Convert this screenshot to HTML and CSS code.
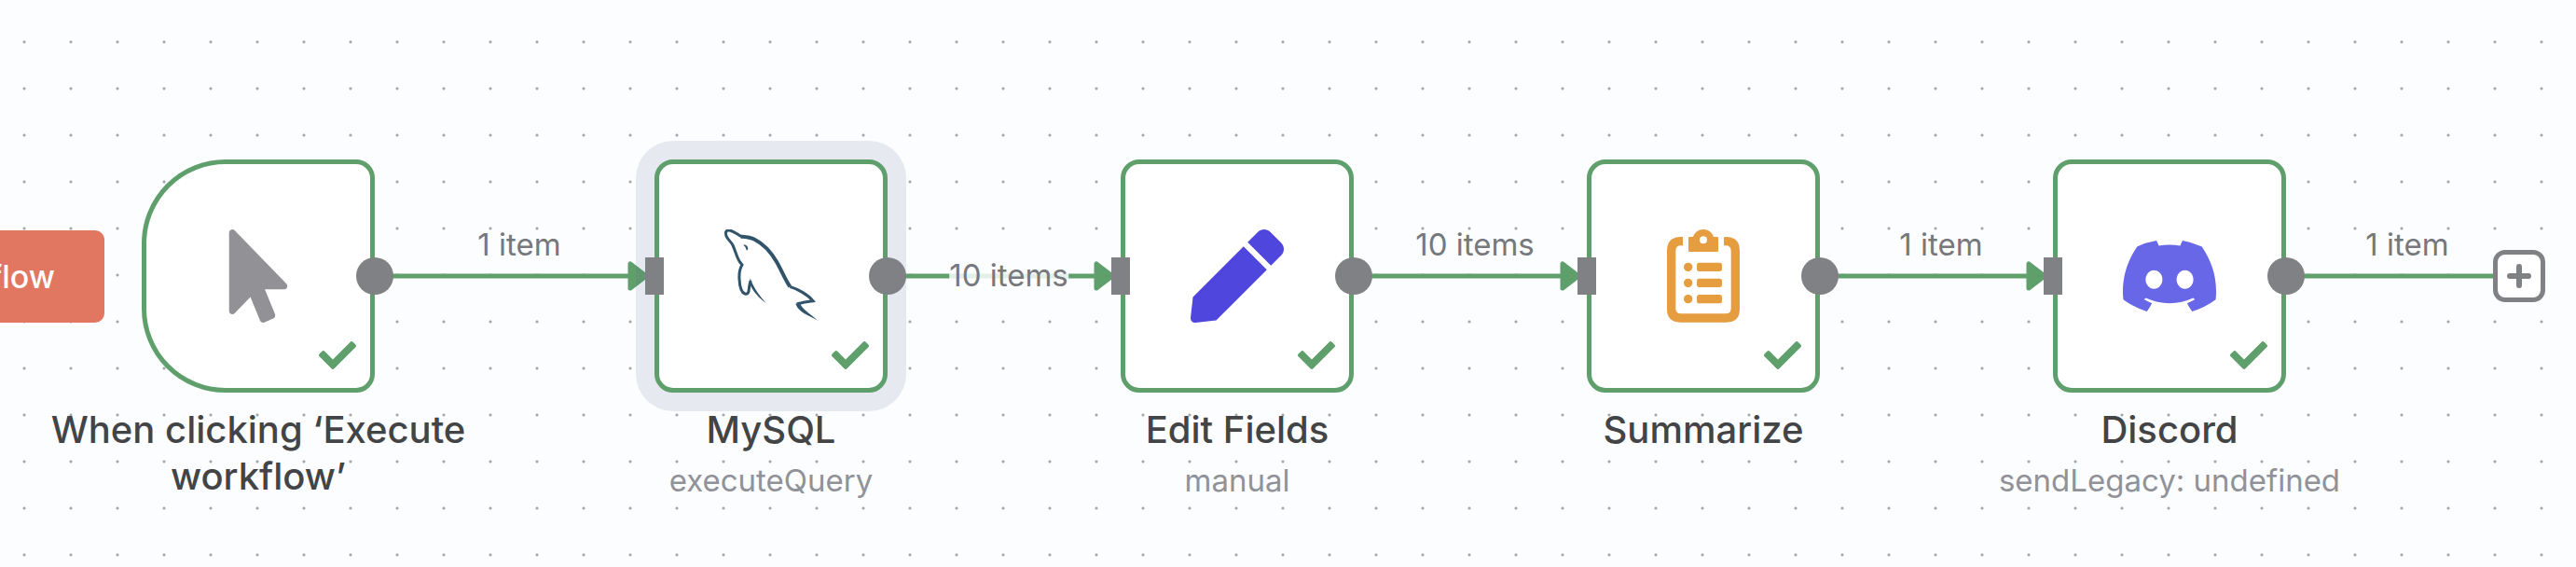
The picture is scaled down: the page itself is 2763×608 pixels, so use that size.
FILE: index.html
```html
<!DOCTYPE html>
<html lang="en">
<head>
<meta charset="utf-8">
<meta name="viewport" content="width=device-width, initial-scale=1">
<title>Workflow canvas</title>
<link rel="stylesheet" href="styles.css">
</head>
<body>
<svg class="defs" aria-hidden="true">
  <symbol id="check" viewBox="0 65 512 382"><path d="M173.898 439.404l-166.4-166.4c-9.997-9.997-9.997-26.206 0-36.204l36.203-36.204c9.997-9.998 26.207-9.998 36.204 0L192 312.69 432.095 72.596c9.997-9.997 26.207-9.997 36.204 0l36.203 36.204c9.997 9.997 9.997 26.206 0 36.204l-294.4 294.401c-9.998 9.997-26.207 9.997-36.204-.001z"/></symbol>
  <marker id="arrow" viewBox="0 0 24 32" markerWidth="24" markerHeight="32" refX="2" refY="16" markerUnits="userSpaceOnUse"><path class="arrow" d="M3 3V29L20 16Z"/></marker>
</svg>
<main class="canvas">
  <svg class="edges" aria-hidden="true">
    <path d="M402 296H675" marker-end="url(#arrow)"/>
    <path d="M952 296H1175" marker-end="url(#arrow)"/>
    <path d="M1452 296H1675" marker-end="url(#arrow)"/>
    <path d="M1952 296H2175" marker-end="url(#arrow)"/>
    <path d="M2452 296H2680"/>
  </svg>
  <span class="edge-label edge-label-1">1 item</span>
  <span class="edge-label edge-label-2">10 items</span>
  <span class="edge-label edge-label-3">10 items</span>
  <span class="edge-label edge-label-4">1 item</span>
  <span class="edge-label edge-label-5">1 item</span>

  <article class="node node-trigger">
    <button class="execute" type="button">Execute workflow</button>
    <div class="box">
      <svg class="icon icon-cursor" viewBox="0 0 320 512"><path d="M302.189 329.126H196.105l55.831 135.993c3.889 9.428-.555 19.999-9.444 23.999l-49.165 21.427c-9.165 4-19.443-.571-23.332-9.714l-53.053-129.136-86.664 89.138C18.729 472.71 0 463.554 0 447.977V18.299C0 1.899 19.921-6.096 30.277 5.443l284.412 292.542c11.472 11.179 3.007 31.141-12.5 31.141z"/></svg>
      <svg class="status"><use href="#check"/></svg>
      <span class="output"></span>
    </div>
    <div class="caption"><h2 class="title">When clicking ‘Execute workflow’</h2></div>
  </article>

  <article class="node node-mysql">
    <div class="box selected">
      <svg class="icon icon-mysql" viewBox="51 48 300 300">
        <path class="body" d="M106 71C92 64 82 54 68 51C56 49 53 58 57 69C61 80 72 87 78 99C86 116 92 141 101 153L108 162C101 173 98 192 99 208C100 230 106 251 117 255C128 258 129 249 130 240C131 228 133 222 135 213"/>
        <path class="back" d="M104 71C120 72 132 72 148 80C176 94 202 123 219 152C234 178 245 207 262 232"/>
        <path class="tail" d="M262 232C284 239 318 256 336 278C322 279 302 282 284 288"/>
        <path d="M134 205C144 235 164 262 185 285C163 270 143 248 132 222Z"/>
        <path d="M280 287L294 286C301 305 331 323 351 341C326 325 290 317 280 287Z"/>
        <path d="M112 98C118 95 128 102 127 111L123 116L118 104Z"/>
      </svg>
      <svg class="status"><use href="#check"/></svg>
      <span class="input"></span><span class="output"></span>
    </div>
    <div class="caption"><h2 class="title">MySQL</h2><p class="subtitle">executeQuery</p></div>
  </article>

  <article class="node node-edit">
    <div class="box">
      <svg class="icon icon-pen" viewBox="0 0 512 512"><path d="M290.74 93.24l128.02 128.02-277.99 277.99-114.14 12.6C11.35 513.54-1.56 500.62.14 485.34l12.7-114.22 277.9-277.88zm207.2-19.06l-60.11-60.11c-18.75-18.75-49.16-18.75-67.91 0l-56.55 56.55 128.02 128.02 56.55-56.55c18.75-18.76 18.75-49.16 0-67.91z"/></svg>
      <svg class="status"><use href="#check"/></svg>
      <span class="input"></span><span class="output"></span>
    </div>
    <div class="caption"><h2 class="title">Edit Fields</h2><p class="subtitle">manual</p></div>
  </article>

  <article class="node node-summarize">
    <div class="box">
      <svg class="icon icon-clipboard" viewBox="351 288 300 300">
        <path d="M435 312V340H429Q412 340 412 357V542Q412 559 429 559H573Q590 559 590 542V357Q590 340 573 340H567V315Q567 312 570 312H576Q618 314 618 356V544Q618 587 575 587H427Q384 587 384 544V356Q384 314 426 312Z"/>
        <path fill-rule="evenodd" d="M456 312H468C473 297 485 288 501 288S529 297 534 312H546Q549 312 549 315V357Q549 360 546 360H456Q453 360 453 357V315Q453 312 456 312ZM501 310A12 12 0 1 0 501 334A12 12 0 1 0 501 310Z"/>
        <circle cx="452" cy="409" r="14"/><circle cx="452" cy="460" r="14"/><circle cx="452" cy="512" r="14"/>
        <rect x="480" y="395" width="81" height="28" rx="8"/><rect x="480" y="446" width="81" height="28" rx="8"/><rect x="480" y="498" width="81" height="28" rx="8"/>
      </svg>
      <svg class="status"><use href="#check"/></svg>
      <span class="input"></span><span class="output"></span>
    </div>
    <div class="caption"><h2 class="title">Summarize</h2></div>
  </article>

  <article class="node node-discord">
    <div class="box">
      <svg class="icon icon-discord" viewBox="0 0 127.14 96.36"><path d="M107.7,8.07A105.15,105.15,0,0,0,81.47,0a72.06,72.06,0,0,0-3.36,6.83A97.68,97.68,0,0,0,49,6.83,72.37,72.37,0,0,0,45.64,0,105.89,105.89,0,0,0,19.39,8.09C2.79,32.65-1.71,56.6.54,80.21h0A105.73,105.73,0,0,0,32.71,96.36,77.7,77.7,0,0,0,39.6,85.25a68.42,68.42,0,0,1-10.85-5.18c.91-.66,1.8-1.34,2.66-2a75.57,75.57,0,0,0,64.32,0c.87.71,1.76,1.39,2.66,2a68.68,68.68,0,0,1-10.87,5.19,77,77,0,0,0,6.89,11.1A105.25,105.25,0,0,0,126.6,80.22h0C129.24,52.84,122.09,29.11,107.7,8.07ZM42.45,65.69C36.18,65.69,31,60,31,53s5-12.74,11.43-12.74S54,46,53.89,53,48.84,65.69,42.45,65.69Zm42.24,0C78.41,65.69,73.25,60,73.25,53s5-12.74,11.44-12.74S96.23,46,96.12,53,91.08,65.69,84.69,65.69Z"/></svg>
      <svg class="status"><use href="#check"/></svg>
      <span class="input"></span><span class="output"></span>
    </div>
    <div class="caption"><h2 class="title">Discord</h2><p class="subtitle">sendLegacy: undefined</p></div>
  </article>

  <button class="add" type="button" aria-label="Add node">
    <svg class="plus" viewBox="0 0 26 26"><path d="M13 3V23M3 13H23"/></svg>
  </button>
</main>
</body>
</html>
```
FILE: styles.css
```css
:root {
  --green: #5f9f6c;
  --handle: #808184;
  --canvas: #fbfdff;
}

* {
  box-sizing: border-box;
}

body {
  margin: 0;
  font-family: Inter, "Liberation Sans", sans-serif;
}

.defs {
  position: absolute;
  width: 0;
  height: 0;
}

.canvas {
  position: relative;
  min-height: 100vh;
  overflow: hidden;
  background-color: var(--canvas);
  background-image: radial-gradient(circle at center, #a6a7ab 1px, transparent 2px);
  background-size: 50px 50px;
  background-position: 1px 20px;
}

.edges {
  position: absolute;
  inset: 0;
  width: 100%;
  height: 100%;
  fill: none;
  stroke: var(--green);
  stroke-width: 5px;
}

.arrow {
  fill: var(--green);
  stroke: var(--green);
  stroke-width: 5px;
  stroke-linejoin: round;
}

.edge-label {
  position: absolute;
  top: 262px;
  transform: translate(-50%, -50%);
  font-size: 33px;
  line-height: 40px;
  white-space: nowrap;
  color: #76787c;
}

.edge-label-1 { left: 557px; }
.edge-label-2 {
  left: 1082px;
  top: 295px;
  background: rgba(251, 253, 255, 0.85);
}
.edge-label-3 { left: 1582px; }
.edge-label-4 { left: 2082px; }
.edge-label-5 { left: 2582px; }

.node {
  position: absolute;
  top: 171px;
  width: 250px;
  display: flex;
  flex-direction: column;
  align-items: center;
  gap: 15px;
}

.node-trigger { left: 152px; }
.node-mysql { left: 702px; }
.node-edit { left: 1202px; }
.node-summarize { left: 1702px; }
.node-discord { left: 2202px; }

.box {
  position: relative;
  width: 100%;
  aspect-ratio: 1;
  display: flex;
  align-items: center;
  justify-content: center;
  border: 5px solid var(--green);
  border-radius: 20px;
  background: #fff;
}

.node-trigger .box {
  border-radius: 90px 20px 20px 90px;
}

.selected {
  box-shadow: 0 0 0 20px rgba(90, 100, 140, 0.13);
}

.icon {
  width: 100px;
  height: 100px;
}

.icon-cursor { fill: #919196; }
.icon-mysql { fill: #31546b; }
.icon-pen { fill: #4f46dd; }
.icon-clipboard { fill: #e59d40; }
.icon-discord { fill: #6767e8; }

.body,
.back,
.tail {
  fill: none;
  stroke: #31546b;
  stroke-width: 9px;
  stroke-linejoin: miter;
}

.back { stroke-width: 12px; }

.status {
  position: absolute;
  right: 15px;
  bottom: 20px;
  width: 40px;
  height: 30px;
  fill: var(--green);
}

.input,
.output {
  position: absolute;
  top: 50%;
  height: 40px;
  background: var(--handle);
  transform: translateY(-50%);
}

.input {
  left: -15px;
  width: 20px;
}

.output {
  right: -25px;
  width: 40px;
  border-radius: 50%;
}

.caption {
  display: flex;
  flex-direction: column;
  align-items: center;
  gap: 9px;
  width: 500px;
  text-align: center;
}

.title {
  margin: 0;
  font-size: 40px;
  font-weight: 500;
  line-height: 50px;
  color: #434446;
}

.subtitle {
  margin: 0;
  font-size: 33px;
  line-height: 40px;
  color: #909298;
}

.execute {
  position: absolute;
  top: 76px;
  right: calc(100% + 40px);
  height: 99px;
  padding: 0 53px;
  border: 0;
  border-radius: 10px;
  background: #e17661;
  color: #fff;
  font-family: inherit;
  font-size: 34px;
  font-weight: 500;
  white-space: nowrap;
}

.add {
  position: absolute;
  top: 268px;
  left: 2674px;
  display: grid;
  place-items: center;
  width: 56px;
  height: 56px;
  padding: 0;
  border: 5px solid var(--handle);
  border-radius: 13px;
  background: #fff;
}

.plus {
  width: 26px;
  height: 26px;
  fill: none;
  stroke: var(--handle);
  stroke-width: 6px;
  stroke-linecap: round;
}
```
